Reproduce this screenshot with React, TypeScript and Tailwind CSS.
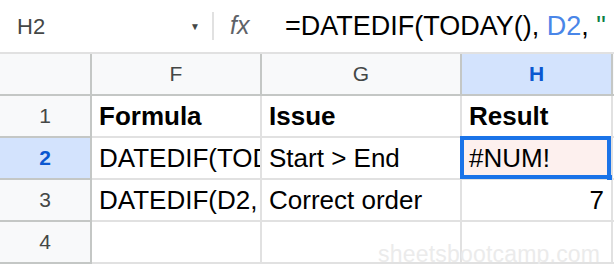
const font = { fontFamily: '"Liberation Sans", Arial, sans-serif' };

const cols = ["F", "G", "H"];

type Row = { n: number; cells: [string, string, string]; bold?: boolean };

const rows: Row[] = [
  { n: 1, cells: ["Formula", "Issue", "Result"], bold: true },
  { n: 2, cells: ["DATEDIF(TODAY(), D2, \"D\")", "Start > End", "#NUM!"] },
  { n: 3, cells: ["DATEDIF(D2, TODAY(), \"D\")", "Correct order", "7"] },
  { n: 4, cells: ["", "", ""] },
];

export default function App() {
  return (
    <div
      className="relative h-[264px] w-[614px] overflow-hidden bg-white"
      style={font}
    >
      {/* formula bar */}
      <div className="flex h-[54px] items-center border-b-2 border-[#e1e1e1]">
        <div className="flex w-[212px] items-center pl-[17px] pr-[12px]">
          <span className="text-[22px] text-[#444746]">H2</span>
          <span className="ml-auto text-[10px] text-[#444746]">▼</span>
        </div>
        <div className="h-[28px] w-[2px] bg-[#e1e1e1]" />
        <span className="ml-[16px] w-[38px] text-[25px] italic text-[#5f6368]">
          fx
        </span>
        <div className="ml-[17px] whitespace-nowrap text-[27px] text-black">
          =DATEDIF(TODAY(), <span className="text-[#4a86e8]">D2</span>,{" "}
          <span className="text-[#0b8043]">"</span>
        </div>
      </div>

      {/* grid */}
      <div className="grid grid-cols-[92px_170px_200px_151px_1px]">
        {/* header row */}
        <div className="h-[42px] border-b-2 border-r-2 border-[#c4c7c5] bg-[#f8f9fa]" />
        {cols.map((c) => (
          <div
            key={c}
            className={
              c === "H"
                ? "flex h-[42px] items-center justify-center border-b-2 border-r-2 border-[#c4c7c5] bg-[#d3e3fd] text-[21px] font-bold text-[#0b57d0]"
                : "flex h-[42px] items-center justify-center border-b-2 border-r-2 border-[#c4c7c5] bg-[#f8f9fa] text-[21px] text-[#444746]"
            }
          >
            {c}
          </div>
        ))}
        <div className="h-[42px] border-b-2 border-[#c4c7c5] bg-[#f8f9fa]" />

        {rows.map((r) => (
          <Row key={r.n} row={r} />
        ))}
      </div>

      <div className="pointer-events-none absolute left-[378px] top-[237px] text-[23px] tracking-[0.2px] text-[#ebebeb]">
        sheetsbootcamp.com
      </div>
    </div>
  );
}

function Row({ row }: { row: Row }) {
  const selected = row.n === 2;
  return (
    <>
      <div
        className={
          selected
            ? "flex h-[42px] items-center justify-center border-b-2 border-r-2 border-[#c4c7c5] bg-[#d3e3fd] text-[21px] font-bold text-[#0b57d0]"
            : "flex h-[42px] items-center justify-center border-b-2 border-r-2 border-[#c4c7c5] bg-[#f8f9fa] text-[21px] text-[#444746]"
        }
      >
        {row.n}
      </div>
      {row.cells.map((text, i) => {
        const isResult = i === 2;
        const numeric = isResult && /^\d+$/.test(text);
        const active = selected && isResult;
        return (
          <div
            key={i}
            className={
              "relative flex h-[42px] items-center border-b-2 border-r-2 border-[#e1e1e1] " +
              (active ? "bg-[#fdf0ee] " : "")
            }
          >
            <span
              className={
                "block w-full overflow-hidden whitespace-nowrap px-[7px] text-[26px] leading-[32px] text-black " +
                (row.bold ? "font-bold " : "") +
                (numeric ? "text-right" : "")
              }
            >
              {text}
            </span>
            {active && (
              <>
                <div className="pointer-events-none absolute -left-[2px] -top-[2px] h-[43px] w-[151px] border-[4px] border-[#1a73e8]" />
                <div className="absolute right-[-1px] top-[37px] h-[5px] w-[5px] rounded-tl-[2px] bg-[#1a73e8]" />
              </>
            )}
          </div>
        );
      })}
      <div className="h-[42px] border-b-2 border-[#e1e1e1]" />
    </>
  );
}
